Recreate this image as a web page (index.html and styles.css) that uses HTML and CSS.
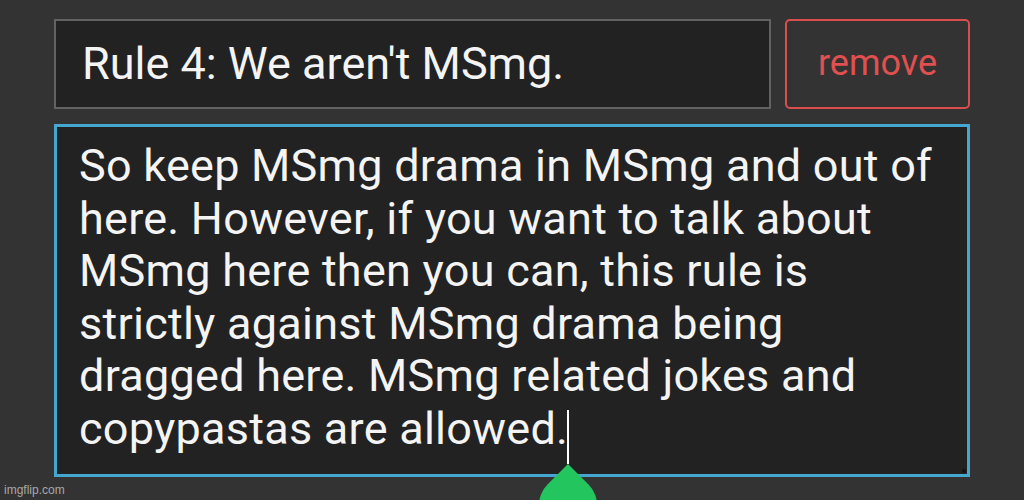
FILE: index.html
```html
<!DOCTYPE html>
<html>
<head>
<meta charset="utf-8">
<link rel="stylesheet" href="styles.css">
</head>
<body>
<div class="page">
  <div class="rule-row">
    <div class="rule-title">Rule 4: We aren't MSmg.</div>
    <button class="remove-btn">remove</button>
  </div>
  <div class="rule-body">So keep MSmg drama in MSmg and out of<br>here. However, if you want to talk about<br>MSmg here then you can, this rule is<br>strictly against MSmg drama being<br>dragged here. MSmg related jokes and<br>copypastas are allowed.<span class="caret"><span class="handle"></span></span><span class="grip"></span></div>
</div>
<div class="watermark">imgflip.com</div>
</body>
</html>
```
FILE: styles.css
```css
html, body {
  margin: 0;
  padding: 0;
  width: 1024px;
  height: 500px;
  overflow: hidden;
  background: #333333;
}
body {
  position: relative;
  font-family: Roboto, "Liberation Sans", sans-serif;
}
.page {
  padding: 19px 0 0 54px;
  display: flex;
  flex-direction: column;
  gap: 15px;
  width: 916px;
}
.rule-row {
  display: flex;
  gap: 14px;
  height: 90px;
}
.rule-title {
  flex: 0 0 717px;
  box-sizing: border-box;
  background: #222222;
  border: 2.5px solid #626262;
  color: #f4f4f4;
  font-size: 45px;
  display: flex;
  align-items: center;
  padding-left: 26px;
  padding-bottom: 2px;
}
.remove-btn {
  flex: 1;
  box-sizing: border-box;
  background: transparent;
  border: 2.5px solid #d94f4f;
  border-radius: 5px;
  color: #e05050;
  font-family: Roboto, "Liberation Sans", sans-serif;
  font-size: 36px;
  padding: 0 0 2px 0;
}
.rule-body {
  position: relative;
  box-sizing: border-box;
  height: 353px;
  background: #222222;
  border: 3px solid #45a6cf;
  color: #f4f4f4;
  font-size: 45px;
  letter-spacing: 0.25px;
  line-height: 52.5px;
  padding: 13px 10px 0 22px;
  white-space: nowrap;
}
.caret {
  position: relative;
  display: inline-block;
  width: 2px;
  height: 54px;
  margin-left: -1px;
  background: #ffffff;
  vertical-align: -20px;
}
.handle {
  position: absolute;
  left: -28px;
  top: 54px;
  width: 58px;
  height: 58px;
}
.handle::before {
  content: "";
  position: absolute;
  left: 0;
  top: 12px;
  width: 58px;
  height: 58px;
  background: #22c55e;
  border-radius: 0 50% 50% 50%;
  transform: rotate(45deg);
  transform-origin: center;
}
.grip {
  position: absolute;
  right: 1px;
  bottom: 1px;
  width: 4px;
  height: 4px;
  background: #111;
  border-radius: 50%;
}
.watermark {
  position: absolute;
  left: 4px;
  bottom: 3px;
  font-family: "Liberation Sans", Arial, sans-serif;
  font-size: 12px;
  color: #a8a8a8;
}
```
